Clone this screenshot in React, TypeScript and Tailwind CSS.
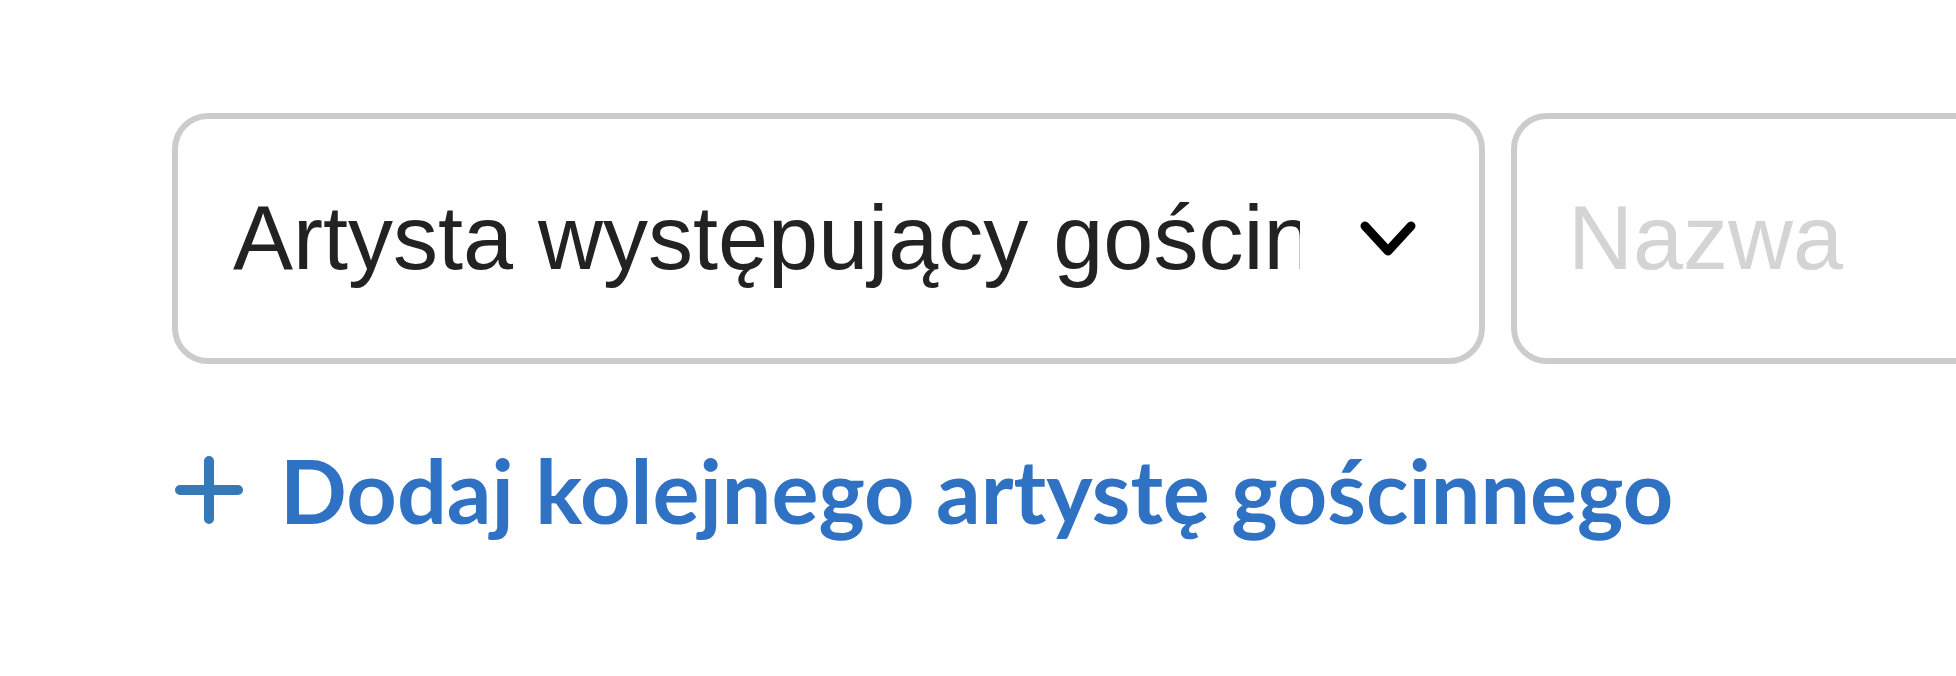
export default function App() {
  return (
    <div className="w-[1956px] h-[676px] overflow-hidden bg-white">
      <div className="pl-[172px] pt-[113px]">
        <div className="flex gap-[26px]">
          {/* select */}
          <div className="shrink-0 w-[1313px] h-[251px] border-[6px] border-[#cccccc] rounded-[36px] flex items-center pl-[55px] pr-[63px]">
            <span className="flex-1 overflow-hidden whitespace-nowrap text-[90px] leading-[1.3] text-[#222222] font-['Liberation_Sans',Arial,sans-serif]">
              Artysta występujący gościnnego
            </span>
            <svg className="ml-[60px] shrink-0" width="56" height="36" viewBox="0 0 56 36" fill="none">
              <path d="M5 5 L28 30 L51 5" stroke="#000" strokeWidth="9" strokeLinecap="round" strokeLinejoin="round" />
            </svg>
          </div>
          {/* name input */}
          <div className="shrink-0 w-[900px] h-[251px] border-[6px] border-[#cccccc] rounded-[36px] flex items-center pl-[51px]">
            <input
              placeholder="Nazwa"
              className="w-full bg-transparent outline-none text-[90px] leading-[1.3] text-[#222222] placeholder:text-[#d4d4d4] font-['Liberation_Sans',Arial,sans-serif]"
            />
          </div>
        </div>

        <button className="mt-[82px] flex items-center gap-[37px] text-[#2f72c4] font-['Lato',sans-serif] font-bold text-[88px] leading-none">
          <svg className="ml-[3px] shrink-0" width="68" height="68" viewBox="0 0 68 68" fill="none">
            <path d="M34 5 V63 M5 34 H63" stroke="#3579b8" strokeWidth="10" strokeLinecap="round" />
          </svg>
          <span>Dodaj kolejnego artystę gościnnego</span>
        </button>
      </div>
    </div>
  );
}
